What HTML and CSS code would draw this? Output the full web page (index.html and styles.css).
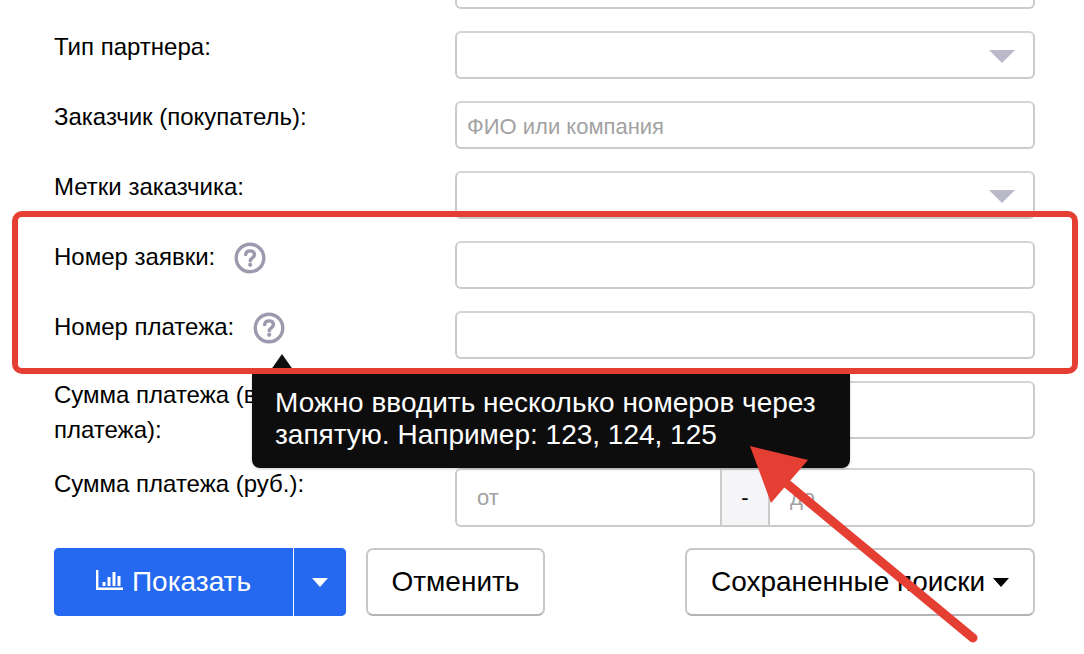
FILE: index.html
```html
<!DOCTYPE html>
<html lang="ru">
<head>
<meta charset="utf-8">
<title>Поиск</title>
<link rel="stylesheet" href="styles.css">
</head>
<body>
<main class="page">
  <form class="form">
    <div class="row"><div class="label"></div><div class="field"><input class="input" type="text"></div></div>
    <div class="row">
      <div class="label">Тип партнера:</div>
      <div class="field select"><input class="input" type="text"><span class="select-caret"></span></div>
    </div>
    <div class="row">
      <div class="label">Заказчик (покупатель):</div>
      <div class="field"><input class="input input-low" type="text" placeholder="ФИО или компания"></div>
    </div>
    <div class="row">
      <div class="label">Метки заказчика:</div>
      <div class="field select"><input class="input" type="text"><span class="select-caret"></span></div>
    </div>
    <div class="row">
      <div class="label with-help">Номер заявки:
        <svg class="help" viewBox="0 0 32 32"><circle cx="16" cy="16" r="13.8"/><path d="M11.6 12.6c.3-2.4 2.1-3.7 4.5-3.7 2.5 0 4.4 1.5 4.4 3.7 0 3.3-4.2 3.1-4.2 6.2"/><circle class="dot" cx="16.2" cy="22.8" r="2.1"/></svg>
      </div>
      <div class="field"><input class="input" type="text"></div>
    </div>
    <div class="row">
      <div class="label with-help">Номер платежа:
        <svg class="help" viewBox="0 0 32 32"><circle cx="16" cy="16" r="13.8"/><path d="M11.6 12.6c.3-2.4 2.1-3.7 4.5-3.7 2.5 0 4.4 1.5 4.4 3.7 0 3.3-4.2 3.1-4.2 6.2"/><circle class="dot" cx="16.2" cy="22.8" r="2.1"/></svg>
      </div>
      <div class="field"><input class="input" type="text"></div>
    </div>
    <div class="row row-tall">
      <div class="label label-wrap">Сумма платежа (валюта платежа):</div>
      <div class="field group tall-a">
        <input class="input part" type="text" placeholder="от"><span class="addon">-</span><input class="input part" type="text" placeholder="до">
      </div>
    </div>
    <div class="row row-range">
      <div class="label">Сумма платежа (руб.):</div>
      <div class="field group tall-b">
        <input class="input part" type="text" placeholder="от"><span class="addon">-</span><input class="input part" type="text" placeholder="до">
      </div>
    </div>
    <div class="actions">
      <div class="actions-left">
        <div class="split">
          <button class="btn-primary" type="button">
            <svg class="chart" viewBox="0 0 27 20"><path class="axis" d="M1.2 0v18.7H27"/><path d="M8 16v-4M13 16V7M18 16V2M23 16V6"/></svg>
            Показать
          </button>
          <button class="btn-caret" type="button" aria-label="Ещё"><span class="caret-white"></span></button>
        </div>
        <button class="btn" type="button">Отменить</button>
      </div>
      <button class="btn btn-saved" type="button">Сохраненные поиски <span class="caret-black"></span></button>
    </div>
  </form>

  <div class="tooltip">Можно вводить несколько номеров через<br>запятую. Например: 123, 124, 125</div>
  <div class="highlight"></div>
  <svg class="arrow" viewBox="0 0 1084 654"><path class="arrow-line" d="M780 478L973 638"/><polygon class="arrow-head" points="750,446 808,460 771,503"/></svg>
</main>
</body>
</html>
```
FILE: styles.css
```css
* { box-sizing: border-box; }
html, body { margin: 0; height: 100%; overflow: hidden; background: #fff; }
body { font-family: "Liberation Sans", Arial, sans-serif; color: #000; }
.page { position: relative; width: 1084px; height: 654px; overflow: hidden; }

.form { display: flex; flex-direction: column; gap: 22px; margin-top: -39px; padding: 0 49px 0 54px; }
.row { display: flex; }
.row-tall { height: 65px; }
.row-range { margin-bottom: -1px; }
.label { width: 401px; flex: none; font-size: 24px; line-height: 31px; padding-right: 60px; }
.label-wrap { line-height: 35px; margin-top: -4px; }
.with-help { display: flex; align-items: flex-start; gap: 19px; }
.field { position: relative; flex: 1; height: 48px; }
.input { display: block; width: 100%; height: 100%; border: 2px solid #cbcbcb; border-top-color: #d4d4d4; border-radius: 6px; background: #fff; font: 22px "Liberation Sans", Arial, sans-serif; padding: 0 10px; outline: none; }
.input-low { padding-top: 3px; }
.input::placeholder { color: #a2a2a2; opacity: 1; }
.help { width: 32px; height: 32px; margin-top: 1px; flex: none; fill: none; stroke: #9b9aae; stroke-width: 3.4; stroke-linecap: round; }
.help .dot { fill: #9b9aae; stroke: none; }
.select-caret { position: absolute; right: 20px; top: 19px; width: 0; height: 0; border-style: solid; border-width: 13px 13px 0; border-color: #b9b9c9 transparent transparent; }
.group { display: flex; }
.tall-a { height: 58px; }
.tall-b { height: 59px; }
.group .part { flex: 1; width: 0; padding-left: 20px; }
.group .part:first-child { border-right: 0; border-radius: 6px 0 0 6px; }
.group .part:last-child { border-left: 0; border-radius: 0 6px 6px 0; }
.addon { width: 50px; flex: none; display: flex; align-items: center; justify-content: center; background: #f5f5f8; border: 2px solid #cbcbcb; font-size: 22px; }

.actions { display: flex; justify-content: space-between; align-items: stretch; height: 68px; }
.actions-left { display: flex; gap: 20px; }
.split { display: flex; width: 292px; border-radius: 5px; overflow: hidden; background: #2469f0; }
.btn-primary, .btn-caret { border: 0; background: #2469f0; color: #fff; font: 28px "Liberation Sans", Arial, sans-serif; padding: 0; display: flex; align-items: center; justify-content: center; }
.btn-primary { width: 240px; border-right: 1px solid #fff; gap: 9px; }
.btn-caret { flex: 1; }
.chart { width: 27px; height: 20px; fill: none; stroke: #fff; stroke-width: 3; margin-top: -4px; }
.chart .axis { stroke-width: 2.4; }
.caret-white { width: 0; height: 0; border-style: solid; border-width: 9px 8px 0; border-color: #fff transparent transparent; }
.btn { background: #fff; border: 2px solid #c8c8c8; border-bottom-color: #b4b4b4; border-radius: 7px; font: 28px "Liberation Sans", Arial, sans-serif; color: #000; padding: 0; width: 179px; }
.btn-saved { width: 350px; }
.caret-black { display: inline-block; width: 0; height: 0; margin-left: 0; vertical-align: 4px; border-style: solid; border-width: 9px 8.5px 0; border-color: #000 transparent transparent; }

.tooltip { position: absolute; left: 252px; top: 374px; width: 598px; height: 94px; padding: 13px 0 0 23px; background: #0d0d0d; color: #fff; border-radius: 0 0 8px 8px; font-size: 28px; line-height: 32px; box-shadow: 0 1px 3px rgba(0,0,0,.2); }
.tooltip::before { content: ""; position: absolute; left: 16px; top: -20px; width: 0; height: 0; border-style: solid; border-width: 0 14px 20px; border-color: transparent transparent #0d0d0d; }
.highlight { position: absolute; left: 12px; top: 211px; width: 1066px; height: 163px; border: 6px solid #e53f34; border-radius: 10px; }
.arrow { position: absolute; left: 0; top: 0; width: 1084px; height: 654px; pointer-events: none; }
.arrow-line { stroke: #e53f34; stroke-width: 9; stroke-linecap: round; fill: none; }
.arrow-head { fill: #e53f34; }
```
